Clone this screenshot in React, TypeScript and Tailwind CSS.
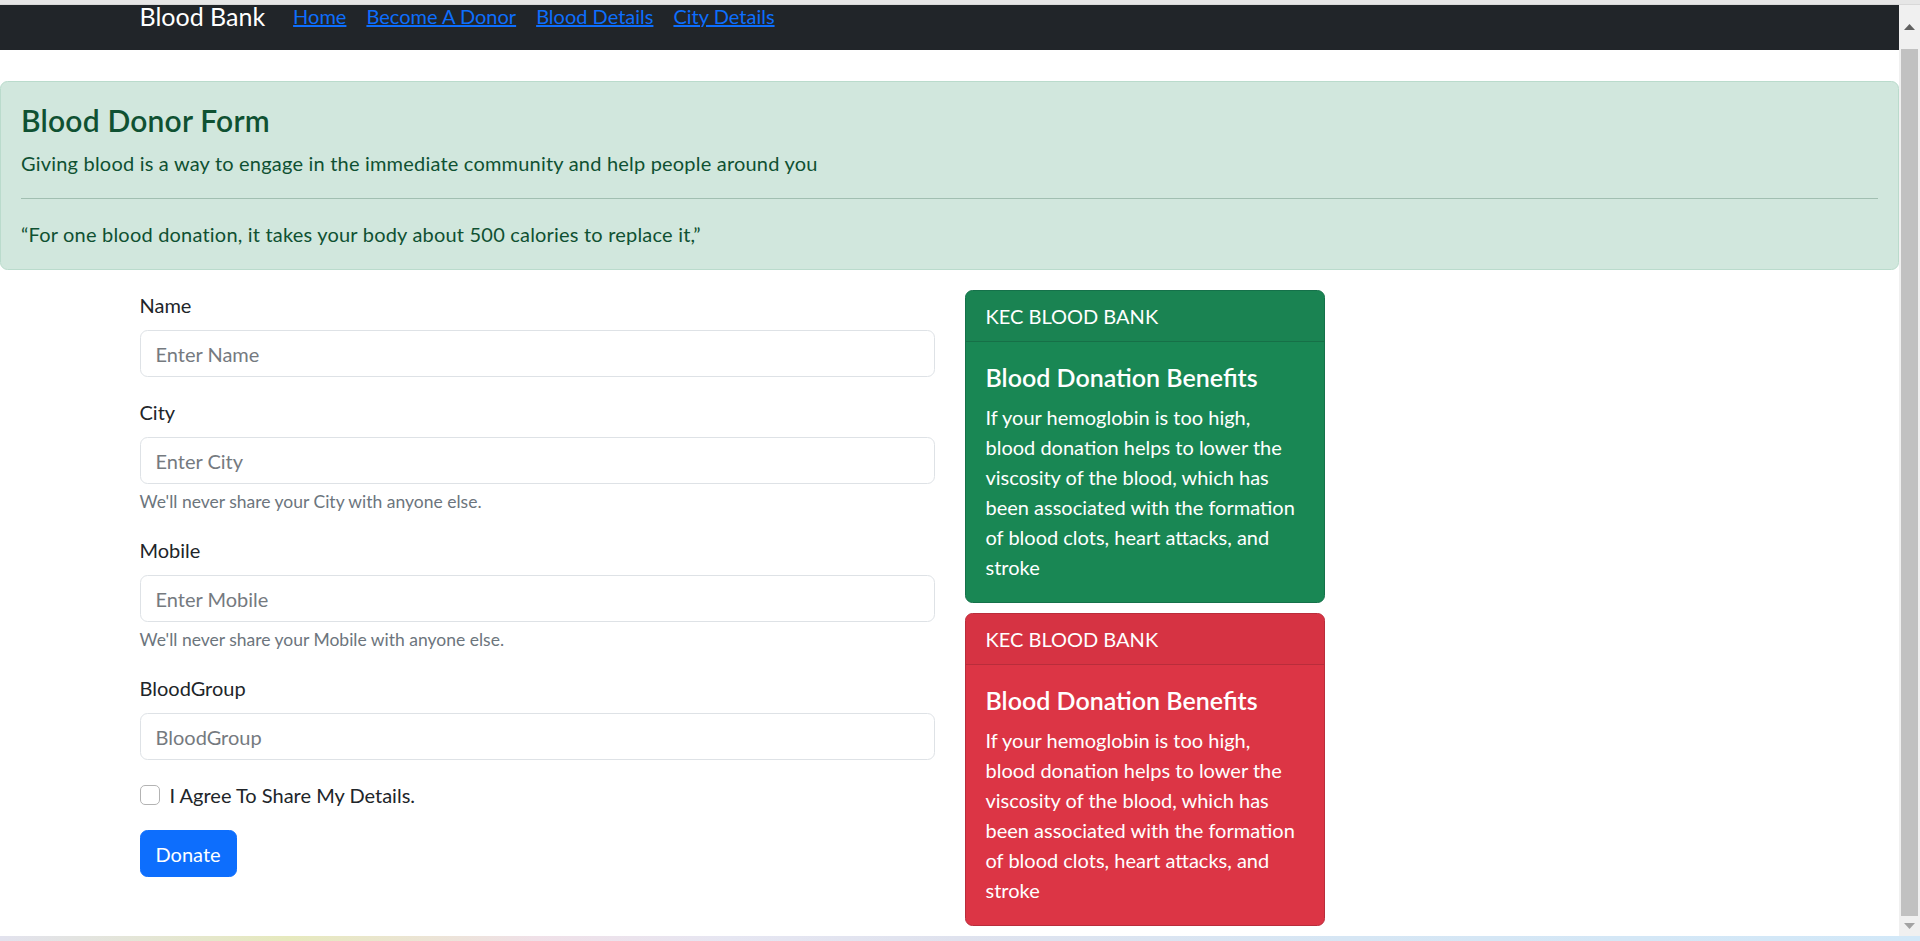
import React from "react";

function Field({
  label,
  placeholder,
  help,
}: {
  label: string;
  placeholder: string;
  help?: string;
}) {
  return (
    <div className="mb-[20px]">
      <label className="block mb-[10px] text-[20px] leading-[30px] text-[#212529]">{label}</label>
      <input
        type="text"
        placeholder={placeholder}
        className="block w-full h-[47px] px-[15px] py-[7.5px] text-[20px] leading-[30px] text-[#212529] bg-white border border-[#dee2e6] rounded-[7.5px] outline-none placeholder:text-[#757a7f]"
      />
      {help && (
        <div className="mt-[5px] text-[17.5px] leading-[26px] text-[#6c757d]">{help}</div>
      )}
    </div>
  );
}

function InfoCard({ tone }: { tone: "green" | "red" }) {
  const green = tone === "green";
  return (
    <div
      className={
        green
          ? "w-[360px] rounded-[7.5px] border border-[#15714a] bg-[#198754] text-white mb-[10px]"
          : "w-[360px] rounded-[7.5px] border border-[#b92d3b] bg-[#dc3545] text-white"
      }
    >
      <div
        className={
          green
            ? "px-[20px] py-[10px] text-[20px] leading-[30px] bg-[#1a8352] border-b border-[#167047] rounded-t-[6.5px]"
            : "px-[20px] py-[10px] text-[20px] leading-[30px] bg-[#d63343] border-b border-[#b92d3b] rounded-t-[6.5px]"
        }
      >
        KEC BLOOD BANK
      </div>
      <div className="p-[20px]">
        <h5 className="text-[25px] leading-[30px] font-semibold mb-[10px]">Blood Donation Benefits</h5>
        <p className="text-[20px] leading-[30px]">
          If your hemoglobin is too high, blood donation helps to lower the viscosity of the blood,
          which has been associated with the formation of blood clots, heart attacks, and stroke
        </p>
      </div>
    </div>
  );
}

export default function App() {
  return (
    <div className="h-[941px] w-[1920px] overflow-hidden flex flex-col bg-white font-['Lato',sans-serif] text-[#212529]">
      <div className="h-[5px] bg-[#e6e6e6] border-b border-[#d8d8d8] shrink-0" />
      <div className="flex flex-1 min-h-0">
        <div className="flex-1 min-w-0 flex flex-col">
          <nav className="h-[45px] bg-[#212529] shrink-0">
            <div className="w-[1650px] mx-auto px-[15px] h-[22px] flex items-center">
              <span className="text-[25px] leading-[22px] text-white mr-[28px]">Blood Bank</span>
              <div className="flex items-center gap-[20px] text-[20px] leading-[22px]">
                <a href="#" className="text-[#0d6efd] underline">Home</a>
                <a href="#" className="text-[#0d6efd] underline">Become A Donor</a>
                <a href="#" className="text-[#0d6efd] underline">Blood Details</a>
                <a href="#" className="text-[#0d6efd] underline">City Details</a>
              </div>
            </div>
          </nav>

          <div className="mt-[31px] mb-[20px] border border-[#badbcc] bg-[#d1e7dd] rounded-[7.5px] p-[20px] text-[#0f5132]">
            <h4 className="text-[30px] leading-[36px] font-semibold mb-[10px] tracking-[0.2px]">Blood Donor Form</h4>
            <p className="text-[20px] leading-[30px] mb-[20px] tracking-[0.2px]">
              Giving blood is a way to engage in the immediate community and help people around you
            </p>
            <hr className="border-0 border-t border-[#a1bfb1] my-[20px]" />
            <p className="text-[20px] leading-[30px] tracking-[0.2px]">
              “For one blood donation, it takes your body about 500 calories to replace it,”
            </p>
          </div>

          <div className="w-[1650px] mx-auto px-[15px] flex gap-[30px]">
            <form className="w-[795px] shrink-0" onSubmit={(e) => e.preventDefault()}>
              <Field label="Name" placeholder="Enter Name" />
              <Field label="City" placeholder="Enter City" help="We'll never share your City with anyone else." />
              <Field label="Mobile" placeholder="Enter Mobile" help="We'll never share your Mobile with anyone else." />
              <Field label="BloodGroup" placeholder="BloodGroup" />
              <div className="mb-[20px] flex items-center h-[30px]">
                <span className="w-[20px] h-[20px] border border-[#b3b3b3] rounded-[5px] bg-white mr-[10px]" />
                <span className="text-[20px] leading-[30px]">I Agree To Share My Details.</span>
              </div>
              <button
                type="submit"
                className="h-[47px] px-[15px] text-[20px] leading-[30px] text-white bg-[#0d6efd] border border-[#0d6efd] rounded-[7.5px]"
              >
                Donate
              </button>
            </form>
            <div className="flex flex-col">
              <InfoCard tone="green" />
              <InfoCard tone="red" />
            </div>
          </div>
        </div>

        <div className="w-[21px] shrink-0 bg-[#f0f0f0] flex flex-col items-center">
          <div className="h-[44px] flex items-center justify-center">
            <svg width="11" height="6" viewBox="0 0 11 6">
              <path d="M0 6 L5.5 0 L11 6 Z" fill="#606060" />
            </svg>
          </div>
          <div className="w-[17px] flex-1 bg-[#c1c1c1]" />
          <div className="h-[20px] flex items-center justify-center">
            <svg width="11" height="6" viewBox="0 0 11 6">
              <path d="M0 0 L11 0 L5.5 6 Z" fill="#a3a3a3" />
            </svg>
          </div>
        </div>
      </div>
      <div className="h-[5px] shrink-0 bg-[linear-gradient(90deg,#e2e2ee_0%,#e6e9bd_15%,#f0e0e8_28%,#e6e6f2_38%,#dfe2ee_50%,#d6e6f4_70%,#d2e8f8_100%)]" />
    </div>
  );
}
